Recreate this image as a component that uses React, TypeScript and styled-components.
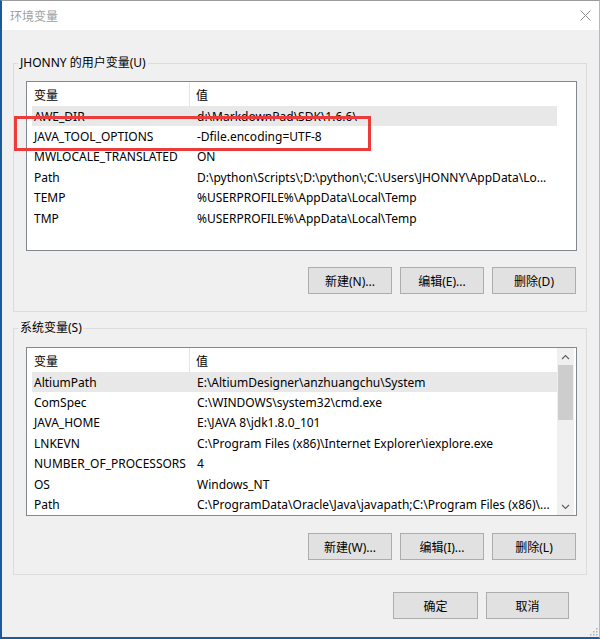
import React from "react";
import styled, { createGlobalStyle } from "styled-components";

const FONT = `"Noto Sans", "Noto Sans CJK SC", sans-serif`;

const Global = createGlobalStyle`
  html, body { margin: 0; padding: 0; background: #f0f0f0; }
  body { font-family: ${FONT}; font-size: 12px; color: #000; }
  * { box-sizing: border-box; }
`;

const Window = styled.div`
  position: relative;
  width: 600px;
  height: 639px;
  border-top: 1px solid #9c9c9c;
  border-left: 2px solid #1b5b9c;
  border-right: 1px solid #b5b9bf;
  border-bottom: 2px solid #1b5b9c;
  background: #f0f0f0;
  display: flex;
  flex-direction: column;
  overflow: hidden;
`;

const TitleBar = styled.div`
  height: 29px;
  flex: none;
  background: #fff;
  display: flex;
  align-items: center;
  padding-left: 8px;
`;

const Title = styled.div`
  flex: 1;
  color: #a0a0a0;
  font-size: 12px;
  font-family: "Noto Sans CJK SC", sans-serif;
`;

const CloseBtn = styled.div`
  width: 28px;
  height: 29px;
  display: flex;
  align-items: center;
  justify-content: center;
`;

const Body = styled.div`
  flex: 1;
  display: flex;
  flex-direction: column;
  padding: 33px 12px 0 11px;
`;

const Group = styled.div<{ $padTop: number; $padBottom: number }>`
  position: relative;
  border: 1px solid #dcdcdc;
  padding: ${(p) => p.$padTop}px 9px ${(p) => p.$padBottom}px 12px;
  display: flex;
  flex-direction: column;
  & + & {
    margin-top: 16px;
  }
`;

const Legend = styled.div`
  position: absolute;
  top: -9px;
  left: 4px;
  padding: 0 2px;
  background: #f0f0f0;
  font-size: 12px;
  line-height: 16px;
`;

const List = styled.div<{ $h: number }>`
  height: ${(p) => p.$h}px;
  border: 1px solid #828790;
  background: #fff;
  display: flex;
  overflow: hidden;
`;

const ListContent = styled.div`
  width: 530px;
  padding-left: 5px;
  display: flex;
  flex-direction: column;
`;

const Header = styled.div`
  height: 24px;
  display: flex;
  flex: none;
`;

const HeadCell = styled.div<{ $w: number; $pad: number; $divider?: boolean }>`
  width: ${(p) => p.$w}px;
  padding-left: ${(p) => p.$pad}px;
  display: flex;
  align-items: center;
  border-right: ${(p) => (p.$divider ? "1px solid #e5e5e5" : "none")};
  font-family: "Noto Sans CJK SC", sans-serif;
`;

const Row = styled.div<{ $hl?: boolean }>`
  height: 20.4px;
  display: flex;
  align-items: center;
  background: ${(p) => (p.$hl ? "#e8e8e8" : "transparent")};
  flex: none;
`;

const Cell = styled.div<{ $w: number; $pad: number }>`
  width: ${(p) => p.$w}px;
  padding-left: ${(p) => p.$pad}px;
  white-space: nowrap;
  overflow: hidden;
`;

const Scrollbar = styled.div`
  width: 17px;
  background: #f0f0f0;
  display: flex;
  flex-direction: column;
  align-items: center;
`;

const ScrollArrow = styled.div`
  height: 17px;
  width: 100%;
  display: flex;
  align-items: center;
  justify-content: center;
  flex: none;
`;

const ScrollTrack = styled.div`
  flex: 1;
  width: 100%;
  padding: 0 1px;
`;

const Thumb = styled.div`
  height: 55px;
  background: #cdcdcd;
`;

const ButtonRow = styled.div<{ $gapTop: number; $padRight: number }>`
  margin-top: ${(p) => p.$gapTop}px;
  padding-right: ${(p) => p.$padRight}px;
  display: flex;
  justify-content: flex-end;
  gap: 8px;
`;

const Button = styled.div<{ $w?: number }>`
  width: ${(p) => p.$w ?? 84}px;
  height: 27px;
  background: #e1e1e1;
  border: 1px solid #adadad;
  display: flex;
  align-items: center;
  justify-content: center;
  font-size: 12px;
  color: #000;
`;

const Footer = styled.div`
  margin-top: 17px;
  display: flex;
  justify-content: flex-end;
  gap: 8px;
  padding-right: 18px;
`;

const Highlight = styled.div`
  position: absolute;
  left: 12px;
  top: 115px;
  width: 357px;
  height: 35px;
  border: 3px solid #ec3b3b;
  pointer-events: none;
`;

const Grip = styled.svg`
  position: absolute;
  right: 1px;
  bottom: 1px;
`;

const userVars: [string, string][] = [
  ["AWE_DIR", "d:\\MarkdownPad\\SDK\\1.6.6\\"],
  ["JAVA_TOOL_OPTIONS", "-Dfile.encoding=UTF-8"],
  ["MWLOCALE_TRANSLATED", "ON"],
  ["Path", "D:\\python\\Scripts\\;D:\\python\\;C:\\Users\\JHONNY\\AppData\\Lo..."],
  ["TEMP", "%USERPROFILE%\\AppData\\Local\\Temp"],
  ["TMP", "%USERPROFILE%\\AppData\\Local\\Temp"],
];

const sysVars: [string, string][] = [
  ["AltiumPath", "E:\\AltiumDesigner\\anzhuangchu\\System"],
  ["ComSpec", "C:\\WINDOWS\\system32\\cmd.exe"],
  ["JAVA_HOME", "E:\\JAVA 8\\jdk1.8.0_101"],
  ["LNKEVN", "C:\\Program Files (x86)\\Internet Explorer\\iexplore.exe"],
  ["NUMBER_OF_PROCESSORS", "4"],
  ["OS", "Windows_NT"],
  ["Path", "C:\\ProgramData\\Oracle\\Java\\javapath;C:\\Program Files (x86)\\..."],
];

const Chevron = ({ up }: { up: boolean }) => (
  <svg width="9" height="6" viewBox="0 0 9 6">
    <polyline
      points={up ? "1,5 4.5,1.5 8,5" : "1,1 4.5,4.5 8,1"}
      fill="none"
      stroke="#606060"
      strokeWidth="1.2"
    />
  </svg>
);

const VarList = ({
  rows,
  height,
  scroll,
}: {
  rows: [string, string][];
  height: number;
  scroll?: boolean;
}) => (
  <List $h={height}>
    <ListContent>
      <Header>
        <HeadCell $w={158} $pad={2} $divider>
          变量
        </HeadCell>
        <HeadCell $w={367} $pad={6}>
          值
        </HeadCell>
      </Header>
      {rows.map(([k, v], i) => (
        <Row key={k + i} $hl={i === 0}>
          <Cell $w={158} $pad={2}>
            {k}
          </Cell>
          <Cell $w={367} $pad={7}>
            {v}
          </Cell>
        </Row>
      ))}
    </ListContent>
    {scroll && (
      <Scrollbar>
        <ScrollArrow>
          <Chevron up />
        </ScrollArrow>
        <ScrollTrack>
          <Thumb />
        </ScrollTrack>
        <ScrollArrow>
          <Chevron up={false} />
        </ScrollArrow>
      </Scrollbar>
    )}
  </List>
);

export default function App() {
  return (
    <>
      <Global />
      <Window>
        <TitleBar>
          <Title>环境变量</Title>
          <CloseBtn>
            <svg width="11" height="11" viewBox="0 0 11 11">
              <path d="M0.5 0.5 L10.5 10.5 M10.5 0.5 L0.5 10.5" stroke="#8c8c8c" strokeWidth="1" />
            </svg>
          </CloseBtn>
        </TitleBar>
        <Body>
          <Group $padTop={17} $padBottom={17}>
            <Legend>JHONNY 的用户变量(U)</Legend>
            <VarList rows={userVars} height={170} />
            <ButtonRow $gapTop={16} $padRight={1}>
              <Button>新建(N)...</Button>
              <Button>编辑(E)...</Button>
              <Button>删除(D)</Button>
            </ButtonRow>
          </Group>
          <Group $padTop={18} $padBottom={14}>
            <Legend>系统变量(S)</Legend>
            <VarList rows={sysVars} height={169} scroll />
            <ButtonRow $gapTop={17} $padRight={1}>
              <Button>新建(W)...</Button>
              <Button>编辑(I)...</Button>
              <Button>删除(L)</Button>
            </ButtonRow>
          </Group>
          <Footer>
            <Button $w={85}>确定</Button>
            <Button $w={83}>取消</Button>
          </Footer>
        </Body>
        <Highlight />
        <Grip width="10" height="10" viewBox="0 0 10 10">
          {[
            [8, 2],
            [8, 5],
            [5, 5],
            [8, 8],
            [5, 8],
            [2, 8],
          ].map(([x, y], i) => (
            <rect key={i} x={x} y={y} width="1.5" height="1.5" fill="#b0b0b0" />
          ))}
        </Grip>
      </Window>
    </>
  );
}
